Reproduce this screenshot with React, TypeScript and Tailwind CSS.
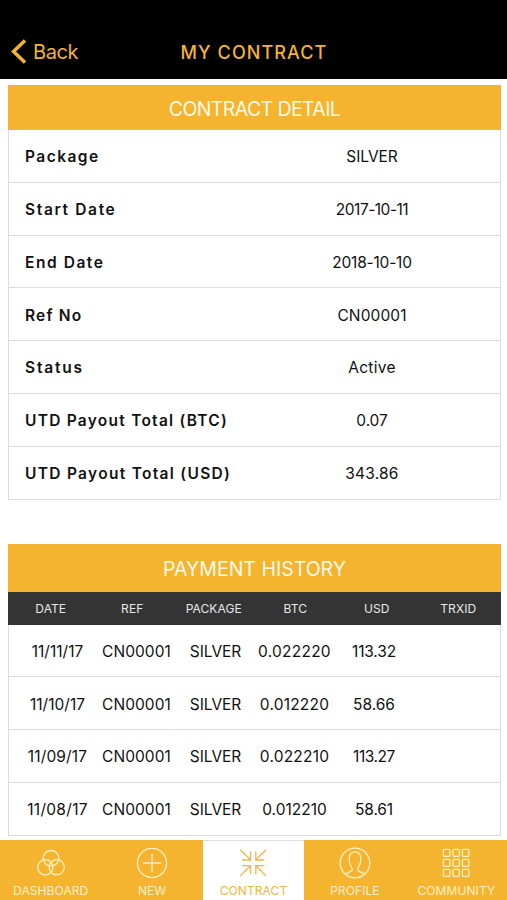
import React from 'react';
import clsx from 'clsx';

interface DetailRow {
  label: string;
  value: string;
  labelClass: string;
  valueClass: string;
}

interface Payment {
  date: string;
  ref: string;
  pkg: string;
  btc: string;
  usd: string;
  dateClass: string;
  btcClass: string;
  usdClass: string;
}

const details: DetailRow[] = [
  { label: 'Package', value: 'SILVER', labelClass: 'tracking-[1.45px]', valueClass: 'tracking-[-0.05px]' },
  { label: 'Start Date', value: '2017-10-11', labelClass: 'tracking-[1.65px]', valueClass: 'tracking-[-0.5px]' },
  { label: 'End Date', value: '2018-10-10', labelClass: 'tracking-[1.55px]', valueClass: 'tracking-[-0.2px]' },
  { label: 'Ref No', value: 'CN00001', labelClass: 'tracking-[1.2px]', valueClass: 'tracking-[0.1px]' },
  { label: 'Status', value: 'Active', labelClass: 'tracking-[1.8px]', valueClass: 'tracking-[0.3px]' },
  { label: 'UTD Payout Total (BTC)', value: '0.07', labelClass: 'tracking-[1.25px]', valueClass: 'tracking-[-0.1px]' },
  { label: 'UTD Payout Total (USD)', value: '343.86', labelClass: 'tracking-[1.3px]', valueClass: 'tracking-[0.2px]' },
];

const payments: Payment[] = [
  { date: '11/11/17', ref: 'CN00001', pkg: 'SILVER', btc: '0.022220', usd: '113.32', dateClass: 'tracking-normal', btcClass: 'tracking-[0.25px]', usdClass: 'tracking-[-0.15px]' },
  { date: '11/10/17', ref: 'CN00001', pkg: 'SILVER', btc: '0.012220', usd: '58.66', dateClass: 'tracking-normal', btcClass: 'tracking-[0.2px]', usdClass: 'tracking-normal' },
  { date: '11/09/17', ref: 'CN00001', pkg: 'SILVER', btc: '0.022210', usd: '113.27', dateClass: 'tracking-[0.15px]', btcClass: 'tracking-[0.2px]', usdClass: 'tracking-[-0.45px]' },
  { date: '11/08/17', ref: 'CN00001', pkg: 'SILVER', btc: '0.012210', usd: '58.61', dateClass: 'tracking-[0.3px]', btcClass: 'tracking-normal', usdClass: 'tracking-[-0.1px]' },
];

const columns = ['DATE', 'REF', 'PACKAGE', 'BTC', 'USD', 'TRXID'];

const iconProps = {
  width: 32,
  height: 32,
  viewBox: '0 0 32 32',
  fill: 'none',
  stroke: 'currentColor',
  strokeWidth: 1.3,
};

const DashboardIcon = () => (
  <svg {...iconProps}>
    <circle cx="16" cy="11.3" r="7.8" />
    <circle cx="10.3" cy="20.3" r="7.600" />
    <circle cx="21.7" cy="20.3" r="7.600" />
  </svg>
);

const NewIcon = () => (
  <svg {...iconProps}>
    <circle cx="16" cy="16" r="14.6" />
    <path d="M16 7v18M7 16h18" />
  </svg>
);

const ContractIcon = () => (
  <svg {...iconProps}>
    <path d="M3.3 2.7l10.2 10.2M13.5 4.5v8.500H5" />
    <path d="M29 2.7l-10.2 10.2M18.8 4.500v8.500h8.500" />
    <path d="M3.3 28.9l10.2-10.2M13.5 27.200v-8.500H5" />
    <path d="M29 28.9l-10.2-10.2M18.8 27.200v-8.500h8.500" />
  </svg>
);

const ProfileIcon = () => (
  <svg {...iconProps}>
    <circle cx="16" cy="16" r="14.8" />
    <path d="M6.8 27c1.6-1.6 4.8-2 6-3.2 1-1.2.2-3-.9-4.8-1.3-2.3-1.9-5.600-1.700-8C10.500 7 12.700 4.900 16 4.900s5.500 2.100 5.800 6.100c.2 2.400-.4 5.700-1.700 8-1.100 1.800-1.900 3.600-.9 4.800 1.200 1.200 4.400 1.600 6 3.200" />
  </svg>
);

const CommunityIcon = () => (
  <svg {...iconProps}>
    {[2.4, 12.4, 22.4].map((y) =>
      [3.4, 12.9, 22.4].map((x) => <rect key={`${x}-${y}`} x={x} y={y} width="6.5" height="7" rx="1.2" />)
    )}
  </svg>
);

const tabs = [
  { label: 'DASHBOARD', icon: DashboardIcon },
  { label: 'NEW', icon: NewIcon },
  { label: 'CONTRACT', icon: ContractIcon },
  { label: 'PROFILE', icon: ProfileIcon },
  { label: 'COMMUNITY', icon: CommunityIcon },
];

const App: React.FC = () => {
  return (
    <div className="flex h-[900px] w-[507px] flex-col overflow-hidden bg-white font-['Inter',sans-serif] text-[#111111]">
      <header className="grid h-[79px] shrink-0 grid-cols-[1fr_auto_1fr] items-center bg-black pt-[25px] text-[#f4b42f]">
        <button className="flex items-center gap-1.5 pl-[11px] text-[20px] tracking-[-0.4px]">
          <svg width="16" height="26" viewBox="0 0 16 26" fill="none" stroke="currentColor" strokeWidth="3.5">
            <path d="M14 1.5L2.5 12.5L14 23.5" />
          </svg>
          Back
        </button>
        <h1 className="pl-px text-[18px] font-medium tracking-[1.1px]">MY CONTRACT</h1>
      </header>

      <main className="flex flex-1 flex-col px-2 pt-1.5">
        <section className="w-[493px]">
          <h2 className="flex h-[45px] items-center justify-center bg-[#f4b42f] pt-1 text-[19.5px] tracking-[-0.6px] text-[#fffbe8]">
            CONTRACT DETAIL
          </h2>
          <dl className="border-x border-[#dcdcdc]">
            {details.map((row) => (
              <div key={row.label} className="grid h-[52.8px] grid-cols-[235px_224px] items-center border-b border-[#dcdcdc] pt-0.5 pl-4">
                <dt className={clsx('text-[15.5px] font-semibold', row.labelClass)}>{row.label}</dt>
                <dd className={clsx('text-center text-[15.5px]', row.valueClass)}>{row.value}</dd>
              </div>
            ))}
          </dl>
        </section>

        <section className="mt-11 w-[493px]">
          <h2 className="flex h-[48px] items-center justify-center bg-[#f4b42f] pt-1 text-[19.5px] text-[#fffbe8]">
            PAYMENT HISTORY
          </h2>
          <div className="grid h-[33px] grid-cols-6 items-center bg-[#343434] px-0.5 pt-0.5 text-center text-[12px] tracking-[0.1px] text-[#e8e8e8]">
            {columns.map((name) => (
              <span key={name}>{name}</span>
            ))}
          </div>
          <div className="border-x border-[#dcdcdc]">
            {payments.map((p) => (
              <div
                key={p.date}
                className="grid h-[52.8px] grid-cols-[79px_79px_79px_79px_80px_1fr] items-center border-b border-[#dcdcdc] pt-0.5 pl-[9px] text-center text-[15.5px]"
              >
                <span className={p.dateClass}>{p.date}</span>
                <span className="tracking-[0.05px]">{p.ref}</span>
                <span className="tracking-[-0.05px]">{p.pkg}</span>
                <span className={p.btcClass}>{p.btc}</span>
                <span className={p.usdClass}>{p.usd}</span>
              </div>
            ))}
          </div>
        </section>
      </main>

      <nav className="grid h-[60px] shrink-0 grid-cols-5">
        {tabs.map(({ label, icon: Icon }) => (
          <button
            key={label}
            className={clsx(
              'flex flex-col items-center',
              label === 'CONTRACT' ? 'border-t border-[#dcdcdc] bg-white pt-1.5 text-[#f0b540]' : 'bg-[#f4b42f] pt-[7px] text-[#fff0c4]'
            )}
          >
            <Icon />
            <span className="mt-1 text-[12px] leading-4 tracking-[0.1px]">{label}</span>
          </button>
        ))}
      </nav>
    </div>
  );
};

export default App;
